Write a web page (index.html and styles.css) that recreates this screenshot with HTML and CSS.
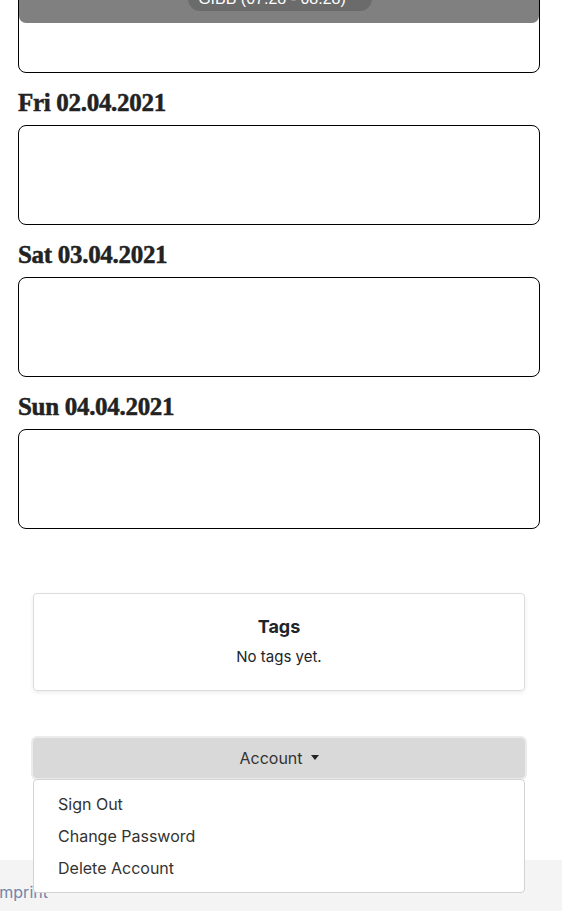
FILE: index.html
```html
<!DOCTYPE html>
<html lang="en">
<head>
<meta charset="utf-8">
<title>Week</title>
<link rel="stylesheet" href="styles.css">
</head>
<body>
<main class="page">
  <section class="days">
    <div class="day-box day-box--first">
      <div class="event">
        <span class="event-pill">GIBB (07:28 - 08:28)</span>
      </div>
    </div>
    <h2 class="day-title">Fri 02.04.2021</h2>
    <div class="day-box"></div>
    <h2 class="day-title">Sat 03.04.2021</h2>
    <div class="day-box"></div>
    <h2 class="day-title">Sun 04.04.2021</h2>
    <div class="day-box"></div>
  </section>

  <section class="tags-card">
    <h3 class="tags-title">Tags</h3>
    <p class="tags-empty">No tags yet.</p>
  </section>

  <div class="account">
    <button class="account-btn" type="button">Account <span class="caret"></span></button>
    <ul class="account-menu">
      <li class="menu-item">Sign Out</li>
      <li class="menu-item">Change Password</li>
      <li class="menu-item">Delete Account</li>
    </ul>
  </div>
</main>
<footer class="footer">
  <a class="footer-link" href="#">Imprint</a>
</footer>
</body>
</html>
```

FILE: styles.css
```css
* { box-sizing: border-box; }

html, body {
  margin: 0;
  padding: 0;
  background: #fff;
  font-family: Inter, "Noto Sans", sans-serif;
  color: #212529;
  overflow: hidden;
}

.page {
  padding: 0 22px 0 18px;
}

.days {
  display: flex;
  flex-direction: column;
}

.day-box {
  height: 100px;
  border: 1px solid #000;
  border-radius: 8px;
  background: #fff;
}

.day-box--first {
  margin-top: -27px;
  padding: 0;
  overflow: hidden;
}

.event {
  height: 49px;
  background: #808080;
  border-radius: 0 0 7px 7px;
  display: flex;
  justify-content: center;
  align-items: flex-end;
  padding-bottom: 12px;
}

.event-pill {
  background: #6b6b6b;
  color: #fff;
  font-size: 16px;
  line-height: 24px;
  padding: 0 26px 0 10px;
  border-radius: 12px;
  margin-left: 2px;
  font-family: "Liberation Sans", Arial, sans-serif;
}

.day-title {
  margin: 16px 0 8px;
  font-family: "Liberation Serif", "Times New Roman", serif;
  font-weight: 700;
  font-size: 25px;
  line-height: 28px;
  letter-spacing: -0.3px;
  color: #222;
  -webkit-text-stroke: 0.5px #222;
}

.tags-card {
  margin: 64px 15px 0 15px;
  border: 1px solid #dcdcdc;
  border-radius: 4px;
  box-shadow: 0 2px 4px rgba(0, 0, 0, 0.07);
  height: 98px;
  text-align: center;
  padding-top: 21px;
}

.tags-title {
  margin: 0;
  font-size: 18px;
  font-weight: 700;
  line-height: 24px;
  color: #212529;
}

.tags-empty {
  margin: 8px 0 0;
  font-size: 15px;
  line-height: 20px;
  color: #212529;
}

.account {
  position: relative;
  margin: 47px 15px 0 15px;
}

.account-btn {
  display: flex;
  width: 100%;
  height: 40px;
  align-items: center;
  justify-content: center;
  gap: 8px;
  background: #d9d9d9;
  border: 1px solid #d9d9d9;
  border-radius: 4px;
  box-shadow: 0 0 0 2px #ebebeb;
  font-family: Inter, "Noto Sans", sans-serif;
  font-size: 16px;
  color: #333;
  padding: 0;
}

.caret {
  width: 0;
  height: 0;
  border-left: 4.5px solid transparent;
  border-right: 4.5px solid transparent;
  border-top: 5px solid #222;
  margin-top: -2px;
}

.account-menu {
  position: absolute;
  top: 41px;
  left: 0;
  right: 0;
  margin: 0;
  padding: 8px 0;
  list-style: none;
  background: #fff;
  border: 1px solid #d3d3d3;
  border-radius: 4px;
  z-index: 5;
}

.menu-item {
  height: 32px;
  line-height: 32px;
  padding: 0 24px;
  font-size: 16px;
  color: #333;
}

.footer {
  margin-top: 82px;
  background: #f4f4f4;
  height: 120px;
  padding: 22px 0 0 0;
}

.footer-link {
  display: inline-block;
  margin-left: -5px;
  font-size: 16px;
  color: #7185aa;
  text-decoration: none;
}
```
